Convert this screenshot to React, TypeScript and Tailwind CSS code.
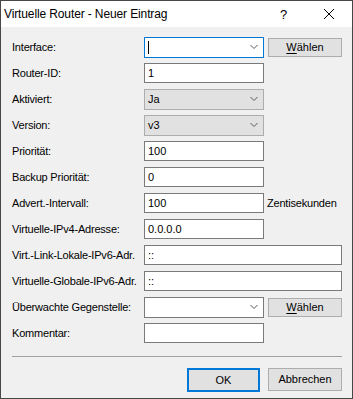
import React from "react";

const Chevron = () => (
  <svg width="8" height="5" viewBox="0 0 8 5" className="absolute right-[5px] top-1/2 -translate-y-1/2">
    <polyline points="0.5,0.5 4,4 7.5,0.5" fill="none" stroke="#5a5a5a" strokeWidth="1" />
  </svg>
);

const TextBox = ({ value = "", wide = false }: { value?: string; wide?: boolean }) => (
  <div
    className={`${wide ? "w-[198px]" : "w-[120px]"} h-[20px] border border-[#7a7a7a] bg-white flex items-center pl-[3px] text-black`}
  >
    {value}
  </div>
);

const Combo = ({
  value = "",
  variant,
  cursor = false,
}: {
  value?: string;
  variant: "focus" | "disabled" | "normal";
  cursor?: boolean;
}) => {
  const cls =
    variant === "focus"
      ? "border-[#0078d7] bg-white"
      : variant === "disabled"
      ? "border-[#adadad] bg-[#e1e1e1]"
      : "border-[#7a7a7a] bg-white";
  return (
    <div className={`relative w-[120px] h-[21px] border ${cls} flex items-center pl-[3px] text-black`}>
      {cursor && <div className="w-[1px] h-[13px] bg-black" />}
      {value}
      <Chevron />
    </div>
  );
};

const Button = ({ children, primary = false, w = "w-[74px]", h = "h-[19px]" }: { children: React.ReactNode; primary?: boolean; w?: string; h?: string }) => (
  <div
    className={`${w} ${h} flex items-center justify-center bg-[#e1e1e1] text-black ${
      primary ? "border-2 border-[#0078d7]" : "border border-[#adadad]"
    }`}
  >
    {children}
  </div>
);

const Waehlen = () => (
  <span>
    <span className="underline underline-offset-2">W</span>ählen
  </span>
);

const Row = ({ label, children }: { label: string; children: React.ReactNode }) => (
  <div className="flex items-center h-[20px]">
    <div className="w-[132px] shrink-0 whitespace-nowrap tracking-[-0.2px]">{label}</div>
    {children}
  </div>
);

export default function App() {
  return (
    <div
      className="w-[353px] h-[399px] border border-[#474747] bg-[#f0f0f0] flex flex-col text-[11px] text-black overflow-hidden"
      style={{ fontFamily: '"Liberation Sans", Arial, sans-serif' }}
    >
      <div className="h-[26px] bg-white flex items-center shrink-0 relative">
        <span className="pl-[3px] text-[12px] tracking-[-0.12px]">Virtuelle Router - Neuer Eintrag</span>
        <span className="absolute left-[279px] top-[4px] text-[13px]">?</span>
        <svg width="10" height="10" viewBox="0 0 10 10" className="absolute left-[323px] top-[8px]">
          <line x1="0" y1="0" x2="10" y2="10" stroke="#000" strokeWidth="1" />
          <line x1="10" y1="0" x2="0" y2="10" stroke="#000" strokeWidth="1" />
        </svg>
      </div>
      <div className="flex-1 flex flex-col pl-[11px] pr-[10px] pt-[10px]">
        <div className="flex flex-col gap-[6px]">
          <Row label="Interface:">
            <Combo variant="focus" cursor />
            <div className="ml-[4px]">
              <Button h="h-[19px]"><Waehlen /></Button>
            </div>
          </Row>
          <Row label="Router-ID:">
            <TextBox value="1" />
          </Row>
          <Row label="Aktiviert:">
            <Combo variant="disabled" value="Ja" />
          </Row>
          <Row label="Version:">
            <Combo variant="disabled" value="v3" />
          </Row>
          <Row label="Priorität:">
            <TextBox value="100" />
          </Row>
          <Row label="Backup Priorität:">
            <TextBox value="0" />
          </Row>
          <Row label="Advert.-Intervall:">
            <TextBox value="100" />
            <span className="ml-[3px] tracking-[-0.2px]">Zentisekunden</span>
          </Row>
          <Row label="Virtuelle-IPv4-Adresse:">
            <TextBox value="0.0.0.0" />
          </Row>
          <Row label="Virt.-Link-Lokale-IPv6-Adr.">
            <TextBox value="::" wide />
          </Row>
          <Row label="Virtuelle-Globale-IPv6-Adr.">
            <TextBox value="::" wide />
          </Row>
          <Row label="Überwachte Gegenstelle:">
            <Combo variant="normal" />
            <div className="ml-[4px]">
              <Button h="h-[19px]"><Waehlen /></Button>
            </div>
          </Row>
          <Row label="Kommentar:">
            <TextBox />
          </Row>
        </div>
        <div className="mt-[13px] h-[1px] bg-[#a0a0a0]" />
        <div className="mt-[11px] flex justify-end gap-[8px]">
          <Button primary w="w-[73px]" h="h-[24px]">OK</Button>
          <Button w="w-[74px]" h="h-[23px]">Abbrechen</Button>
        </div>
      </div>
    </div>
  );
}
